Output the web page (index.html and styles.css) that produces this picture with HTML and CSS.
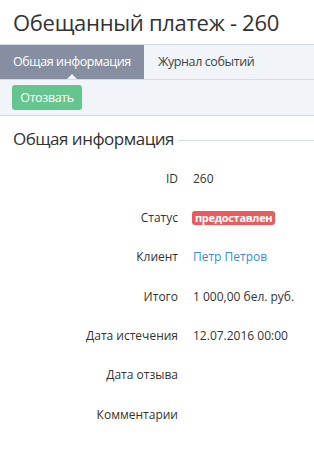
FILE: index.html
```html
<!DOCTYPE html>
<html lang="ru">
<head>
<meta charset="utf-8">
<link rel="stylesheet" href="styles.css">
</head>
<body>
<h1 class="title">Обещанный платеж - 260</h1>
<nav class="tabs">
  <div class="tab active">Общая информация</div>
  <div class="tab">Журнал событий</div>
</nav>
<div class="toolbar">
  <button class="btn">Отозвать</button>
</div>
<h2 class="section">Общая информация</h2>
<div class="props">
  <div class="label">ID</div><div class="value">260</div>
  <div class="label">Статус</div><div class="value"><span class="badge">предоставлен</span></div>
  <div class="label">Клиент</div><div class="value"><a class="link" href="#">Петр Петров</a></div>
  <div class="label">Итого</div><div class="value">1 000,00 бел. руб.</div>
  <div class="label">Дата истечения</div><div class="value">12.07.2016 00:00</div>
  <div class="label">Дата отзыва</div><div class="value"></div>
  <div class="label">Комментарии</div><div class="value"></div>
</div>
</body>
</html>
```
FILE: styles.css
```css
html, body {
  margin: 0;
  padding: 0;
  background: #fff;
  font-family: "Open Sans", "Liberation Sans", sans-serif;
  color: #333;
}
.title {
  margin: 0;
  height: 44px;
  box-sizing: border-box;
  padding: 7px 0 0 13px;
  font-size: 22px;
  letter-spacing: -0.3px;
  font-weight: 400;
  line-height: 30px;
  color: #333;
}
.tabs {
  display: flex;
  height: 36px;
  box-sizing: border-box;
  border-top: 1px solid #d7dce4;
  border-bottom: 1px solid #d7dce4;
  background: #f1f4f8;
}
.tab {
  position: relative;
  padding: 0 14px 0 14px;
  font-size: 12.5px;
  letter-spacing: -0.4px;
  line-height: 34px;
  color: #444;
}
.tab.active {
  background: #868fa2;
  color: #fff;
  padding: 0 13px 0 13px;
}
.tab.active::after {
  content: "";
  position: absolute;
  left: 50%;
  bottom: 0;
  margin-left: -5px;
  border-left: 5px solid transparent;
  border-right: 5px solid transparent;
  border-bottom: 5px solid #f1f4f8;
}
.toolbar {
  height: 36px;
  box-sizing: border-box;
  padding: 5px 12px 0;
  background: #f1f4f8;
  border-bottom: 1px solid #d7dce4;
}
.btn {
  height: 25px;
  width: 70px;
  padding: 0;
  border: none;
  border-radius: 3px;
  background: #64c58f;
  color: #fff;
  font-family: inherit;
  font-size: 12.5px;
  letter-spacing: -0.4px;
  line-height: 25px;
}
.section {
  display: flex;
  align-items: center;
  gap: 4px;
  margin: 0;
  padding: 10px 0 0 13px;
  font-size: 17px;
  letter-spacing: -0.5px;
  font-weight: 400;
  line-height: 26px;
  color: #333;
}
.section::after {
  content: "";
  flex: 1;
  border-top: 1px solid #d5dae2;
  margin-top: 2px;
}
.props {
  display: grid;
  grid-template-columns: 178px 1fr;
  column-gap: 15px;
  grid-auto-rows: 39.33px;
  align-items: center;
  padding-top: 7px;
  font-size: 12px;
  line-height: 18px;
}
.label {
  text-align: right;
  color: #333;
}
.value {
  color: #333;
}
.badge {
  display: inline-block;
  margin-left: -1px;
  background: #ec5a5c;
  color: #fff;
  font-weight: 700;
  font-size: 11px;
  letter-spacing: -0.3px;
  line-height: 14px;
  padding: 0 3px;
  border-radius: 3px;
}
.link {
  color: #3a8ddb;
  text-decoration: none;
}
```
